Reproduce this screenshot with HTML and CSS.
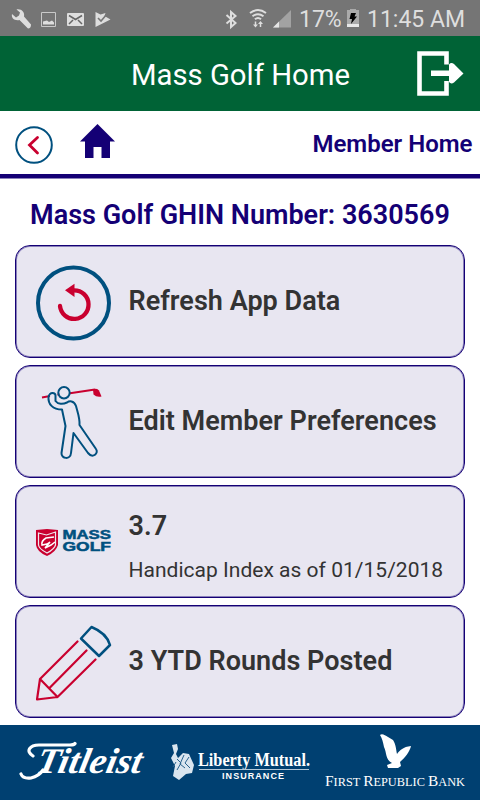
FILE: index.html
```html
<!DOCTYPE html>
<html lang="en">
<head>
  <meta charset="UTF-8">
  <meta name="viewport" content="width=device-width, initial-scale=1.0">
  <title>Mass Golf Home</title>
  <link rel="stylesheet" href="styles.css">
</head>
<body>
  <div class="statusbar">
    <svg class="left-icons" width="120" height="36" viewBox="0 0 120 36" fill="#dedede">
      <path d="M12 14l4 3.500 3-2 1-3-3.500-3c5-1 8.500 3 7.500 7l7 8q0 4-3 4l-8.500-8.500c-5 1-8.500-2-7.500-6z"/>
      <path d="M41.500 12.500h14v14h-14z" fill="none" stroke="#c9c9c9"/>
      <path d="M43 24.500v-3l4-1 2 1.500 3-1.500 2 2v2z"/>
      <rect x="67" y="13" width="17" height="13" rx="1"/>
      <path d="M69 15.500l6.500 4 6.500-4M69 24l4-4M82 24l-4-4" fill="none" stroke="#666" stroke-width="1.500"/>
      <path d="M95.500 12l5 2.500 5-1.500-1 3 6 3.500-15 7.500z"/>
      <path d="M98 18l3 3 6-7" fill="none" stroke="#777" stroke-width="1.600"/>
    </svg>
    <svg class="right-icons" width="72" height="36" viewBox="0 0 72 36" fill="none" stroke="#dedede" stroke-width="2">
      <path d="M1.500 15l9 8-4.500 4V12l4.500 4-9 7.500"/>
      <path d="M25 13q8-6 16 0M27.500 16.200q5.500-4 11 0M30 19.200q3-2.500 6 0"/>
      <path d="M30.500 21.500v4M35.500 23v4" stroke-width="1.500"/>
      <path d="M28 24.500h5l-2.500 3zM33 24h5l-2.500-3z" fill="#dedede" stroke="none"/>
      <path d="M48 27.500L66 10v17.500z" fill="#a2a2a2" stroke="none"/>
      <path d="M48 27.500l6-6v6z" fill="#e5e5e5" stroke="none"/>
    </svg>
    <span class="percent">17%</span>
    <svg class="battery" width="12" height="18" viewBox="0 0 12 18">
      <path d="M0 1h3V0h6v1h3v17H0z" fill="#aaa"/>
      <path d="M0 15h12v3H0z" fill="#e8e8e8"/>
      <path d="M4 4h5L7.500 7.500H10L4 15l1-5H2.500z" fill="#000"/>
    </svg>
    <span class="clock">11:45 AM</span>
  </div>

  <header class="header">
    <h1>Mass Golf Home</h1>
    <svg class="logout" width="48" height="48" viewBox="0 0 48 48">
      <path d="M29.500 14.500V3.500h-27V43.500h27V31" fill="none" stroke="#fff" stroke-width="4.600"/>
      <path d="M14 20.500h18v-6q2-2.500 5-.5l9.500 9.500L37 32.500q-3 2-5-.5v-6H14z" fill="#fff"/>
    </svg>
  </header>

  <nav class="nav">
    <svg width="38" height="38" viewBox="0 0 38 38" fill="none">
      <circle cx="19" cy="19" r="17.800" stroke="#00507f" stroke-width="2"/>
      <path d="M22.500 11.500L14.500 19l8 8" stroke="#c9002f" stroke-width="2.800" stroke-linecap="round"/>
    </svg>
    <svg class="home" width="35" height="34" viewBox="0 0 35 34">
      <path d="M17.500 0L35 17.500h-5V34h-8.500V23h-8v11H5V17.500H0z" fill="#140075"/>
    </svg>
    <span class="nav-title">Member Home</span>
  </nav>

  <main class="content">
    <h2>Mass Golf GHIN Number: 3630569</h2>

    <div class="card">
      <svg class="icon" width="76" height="76" viewBox="0 0 76 76" fill="none">
        <circle cx="37.500" cy="38" r="35.500" stroke="#00507f" stroke-width="4"/>
        <path d="M24 41A14.300 14.300 0 1 0 38 25.300" stroke="#c9002f" stroke-width="4.300" stroke-linecap="round"/>
        <path d="M29 25.300L38.500 18.700v13.300z" fill="#c9002f"/>
      </svg>
      <p class="label">Refresh App Data</p>
    </div>

    <div class="card">
      <svg class="icon" width="76" height="76" viewBox="0 0 76 76" fill="none" stroke="#00507f" stroke-width="2" stroke-linejoin="round">
        <path d="M6 12.500l8-1.500M21.500 9.700l2-.4M34 8.300L59 4.500" stroke="#c9002f"/>
        <path d="M57 4.500q4-2 6 1l2.500 6q-5 1-8-2z" fill="#c9002f" stroke="none"/>
        <circle cx="28" cy="7.800" r="5.700"/>
        <path d="M19.500 16v-5.500q0-2.500-3-2.500t-4 4c-.5 7 4 12.500 13.500 12.500L29.500 41l-4 27c-.5 6 9 7 9.500 0l2.500-20 14.500 20c5 6 11 0 8-4L43.500 40c.5-7-2-13-3.500-19-2-6-7-5-9-3.500-4 2-9 2-11.500-1.500z"/>
      </svg>
      <p class="label">Edit Member Preferences</p>
    </div>

    <div class="card">
      <svg class="icon" width="76" height="76" viewBox="0 0 76 76">
        <path d="M0 25l11-1 11 1v15q-2 7-11 11Q1 47 0 40z" fill="#c9002f"/>
        <path d="M2.500 28l8 2 9-3v13q-1 4-8.500 8-8-4-8.500-8z" fill="none" stroke="#eee9f0" stroke-width="1.200"/>
        <path d="M18 32l-8 1q-5 3-4 7l5-1 3-2-5 6 6-3 4-3" fill="none" stroke="#fff" stroke-width="1.500"/>
        <g class="mass-text" fill="#00507f" stroke="#00507f" stroke-width=".5">
          <text x="26.500" y="33.500" textLength="48.500" lengthAdjust="spacingAndGlyphs">MASS</text>
          <text x="26.500" y="45.500" textLength="48.500" lengthAdjust="spacingAndGlyphs">GOLF</text>
        </g>
      </svg>
      <div class="text">
        <p class="label">3.7</p>
        <p class="sub">Handicap Index as of 01/15/2018</p>
      </div>
    </div>

    <div class="card">
      <svg class="icon" width="76" height="76" viewBox="0 0 76 76" fill="none" stroke="#c9002f" stroke-width="2.200" stroke-linecap="round" stroke-linejoin="round">
        <path d="M41.500 16.500L4 54 1 74.500 21.500 72l38-37.500M50.500 25.500L13.500 63M4 54L21.500 72"/>
        <path d="M45 13.500L55.500 2q15 6 18.500 18L63 31z" stroke="#00507f" stroke-width="2.500"/>
      </svg>
      <p class="label">3 YTD Rounds Posted</p>
    </div>
  </main>

  <footer class="sponsors">
    <svg width="480" height="75" viewBox="0 0 480 75" fill="#fff">
      <g class="titleist" transform="translate(0 48) skewX(-12)">
        <text x="35" y="0" textLength="105" lengthAdjust="spacingAndGlyphs">Titleist</text>
      </g>
      <path d="M33 31c-8-5-3-11 6-11h31q4 0 5-1.500M43 45q-4 6-12 8-8 1-10-4" fill="none" stroke="#fff" stroke-width="3.200" stroke-linecap="round"/>

      <!-- statue -->
      <path d="M172 20l5-1 1 5-2 5 2 4 5-5 6 1 5 11-2 8-6 1-7 6-6-4 2-10-4-8 3-5z" fill="#d9e5ef"/>
      <path d="M177 34l4 4-4 7M184 30l-4 9 5 4M189 32l-4 6 5 5M176 37l-3 5" fill="none" stroke="#28618c"/>
      <text class="liberty" x="198" y="41" textLength="112" lengthAdjust="spacingAndGlyphs">Liberty Mutual.</text>
      <path d="M199 44.500h110" stroke="#b2c8d9"/>
      <text class="insurance" x="222" y="54" textLength="62">INSURANCE</text>

      <!-- eagle -->
      <path d="M380 10c2-2 5 0 8 2l5 3c3 5 3 9 4 14 3-4 6-7 14-8-1 5-6 12-11 16l1 4-3 2h-10l-1-3 5-2c-7-4-5-10-8-16-1-5-2-9-4-12z"/>
      <text class="bank" x="325" y="61" textLength="140" lengthAdjust="spacingAndGlyphs"><tspan class="cap">F</tspan>IRST <tspan class="cap">R</tspan>EPUBLIC <tspan class="cap">B</tspan>ANK</text>
    </svg>
  </footer>
</body>
</html>
```
FILE: styles.css
```css
body{
  margin:0;
  width:480px;
  height:800px;
  overflow:hidden;
  display:flex;
  flex-direction:column;
  background:#fff;
  font-family:Roboto, "Liberation Sans", sans-serif;
}
h1, h2, p{
  margin:0;
}
svg{
  display:block;
  flex:none;
}
.statusbar{
  height:36px;
  flex:none;
  display:flex;
  align-items:center;
  background:#757575;
  color:#dedede;
  font-size:23px;
  line-height:36px;
}
.statusbar span{
  padding-top:4px;
  white-space:nowrap;
}
.right-icons{
  margin-left:105px;
}
.percent{
  margin-left:2px;
  width:43px;
}
.battery{
  margin-left:5px;
}
.clock{
  margin-left:8px;
}
.header{
  height:75px;
  flex:none;
  display:flex;
  align-items:center;
  justify-content:flex-end;
  background:#006336;
  color:#fff;
}
.header h1{
  font-size:29.3px;
  font-weight:400;
  padding-top:3px;
  white-space:nowrap;
}
.logout{
  margin:0 15px 0 67px;
}
.nav{
  height:63px;
  flex:none;
  display:flex;
  align-items:center;
  padding:0 7.5px 0 15px;
  border-bottom:4px solid #140075;
  box-shadow:0 1px 0 #8a80ba;
}
.nav svg{
  margin-top:4px;
}
.nav .home{
  margin:-3px 0 0 27px;
}
.nav-title{
  margin-left:auto;
  padding-top:2px;
  color:#140075;
  font-size:24px;
  font-weight:600;
}
.content{
  flex:none;
  height:547px;
  padding:0 15px;
  box-sizing:border-box;
}
.content h2{
  height:67px;
  padding-top:4px;
  box-sizing:border-box;
  line-height:66px;
  color:#140075;
  font-size:27px;
  font-weight:600;
  text-align:center;
  white-space:nowrap;
}
.card{
  height:112.5px;
  margin-bottom:7.5px;
  box-sizing:border-box;
  display:flex;
  align-items:center;
  padding-left:19.5px;
  border:1px solid #140075;
  border-radius:15px;
  background:#e8e6f1;
  box-shadow:inset 0 0 0 1px #8a80ba;
  color:#333;
}
.icon{
  margin-right:17px;
  margin-top:4px;
}
.label{
  font-size:27px;
  font-weight:600;
  line-height:32px;
  letter-spacing:.03px;
  white-space:nowrap;
}
.text{
  padding-top:11px;
}
.sub{
  margin-top:16px;
  font-size:21px;
  line-height:25px;
  letter-spacing:.02px;
  white-space:nowrap;
}
.mass-text{
  font-family:"Liberation Sans", sans-serif;
  font-size:12.5px;
  font-weight:bold;
}
.sponsors{
  height:75px;
  flex:none;
  background:#004071;
}
.titleist{
  font-family:"Liberation Serif", serif;
  font-size:36px;
  font-style:italic;
  font-weight:bold;
}
.liberty{
  font-family:"Liberation Serif", serif;
  font-size:18px;
  font-weight:bold;
}
.insurance{
  font-family:"Liberation Sans", sans-serif;
  font-size:9px;
  font-weight:bold;
}
.bank{
  font-family:"Liberation Serif", serif;
  font-size:12px;
}
.bank .cap{
  font-size:15px;
}
```
